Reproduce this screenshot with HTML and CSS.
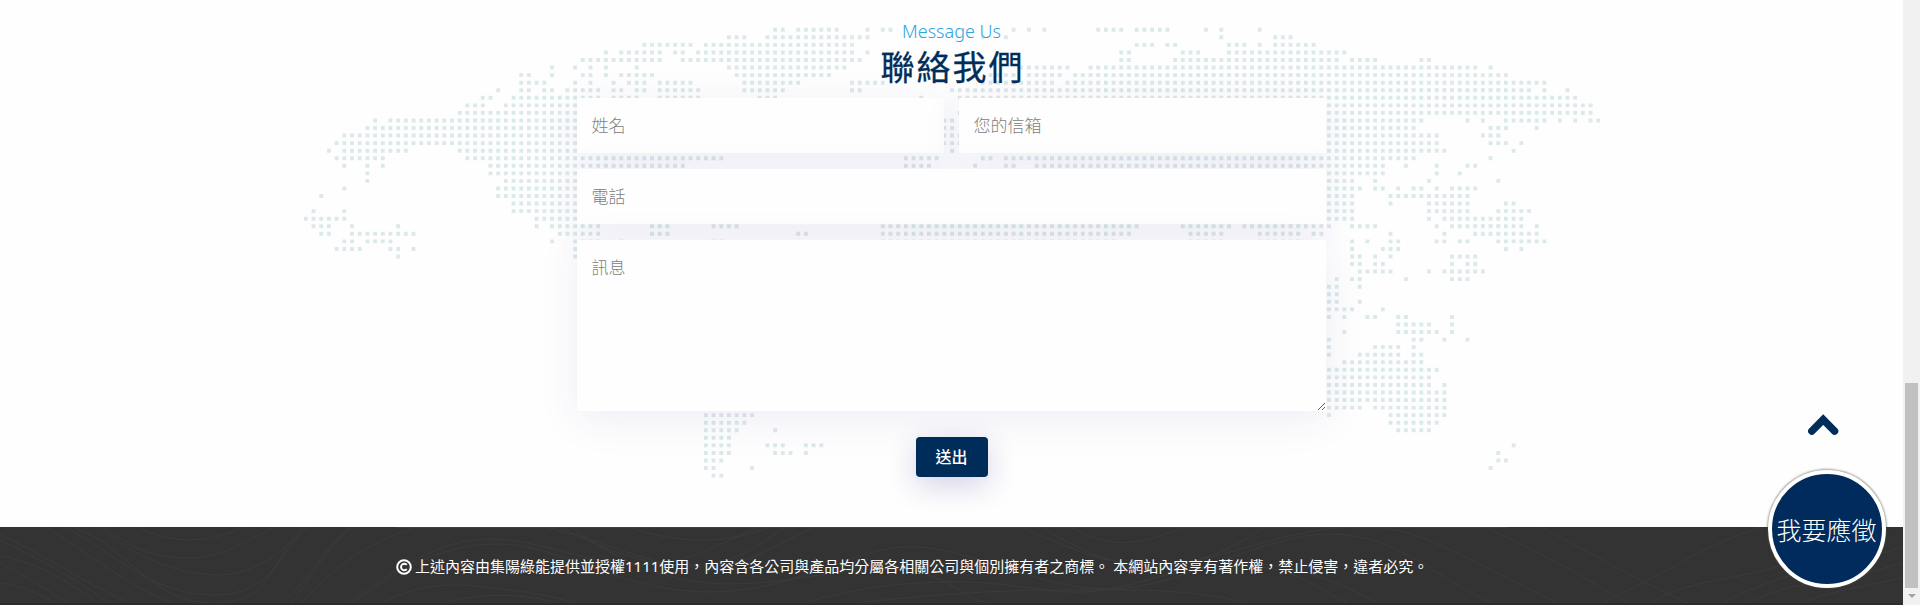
FILE: index.html
```
<!DOCTYPE html>
<html lang="zh-Hant">
<head>
<meta charset="utf-8">
<title>聯絡我們</title>
<link rel="stylesheet" href="styles.css">
</head>
<body>
<div class="page">
  <section class="contact">
    <svg class="map" viewBox="-0.5 -0.5 169 60" preserveAspectRatio="none" aria-hidden="true">
      <path d="M61 0h1.5M64 0h5.5M73 0h.5M75 0h1.5M92 0h.5M94 0h.5M96 0h.5M103 0h3.5M108 0h4.5M117 0h.5M119 0h.5M124 0h.5
      M55 1h2.5M60 1h13.5M88 1h.5M91 1h.5M119 1h.5M126 1h2.5
      M44 2h6.5M52 2h19.5M108 2h2.5M112 2h1.5M120 2h2.5M124 2h.5M126 2h5.5
      M39 3h.5M41 3h5.5M48 3h1.5M51 3h20.5M73 3h.5M106 3h1.5M114 3h2.5M120 3h15.5
      M36 4h10.5M49 4h23.5M106 4h1.5M113 4h21.5M136 4h3.5M145 4h1.5
      M32 5h.5M35 5h.5M37 5h.5M39 5h.5M43 5h.5M55 5h15.5M93 5h6.5M102 5h50.5M154 5h.5
      M28 6h1.5M32 6h.5M36 6h1.5M39 6h.5M41 6h4.5M56 6h12.5M89 6h3.5M94 6h4.5M100 6h56.5
      M28 7h3.5M35 7h.5M37 7h.5M40 7h.5M42 7h2.5M46 7h4.5M57 7h7.5M71 7h4.5M88 7h9.5M99 7h62.5
      M25 8h.5M28 8h1.5M31 8h1.5M34 8h4.5M40 8h1.5M43 8h1.5M46 8h5.5M57 8h5.5M71 8h1.5M84 8h75.5M161 8h.5M164 8h.5
      M23 9h1.5M27 9h11.5M40 9h3.5M46 9h5.5M59 9h2.5M80 9h.5M85 9h80.5
      M21 10h2.5M26 10h9.5M133 10h34.5 M20 11h15.5M85 11h.5M133 11h34.5
      M9 12h.5M11 12h24.5M83 12h1.5M133 12h12.5M151 12h.5M153 12h.5M156 12h5.5M163 12h.5M165 12h.5M167 12h1.5
      M8 13h27.5M83 13h1.5M133 13h11.5M154 13h2.5M160 13h.5
      M5 14h30.5M83 14h2.5M133 14h14.5M153 14h2.5
      M4 15h31.5M83 15h2.5M133 15h14.5M154 15h2.5M158 15h.5
      M3 16h.5M5 16h8.5M20 16h15.5M84 16h.5M133 16h15.5M157 16h.5
      M4 17h6.5M21 17h33.5M78 17h4.5M88 17h1.5M91 17h53.5M154 17h.5
      M5 18h.5M8 18h.5M10 18h.5M24 18h25.5M78 18h3.5M87 18h.5M91 18h1.5M95 18h45.5M143 18h.5M147 18h.5M151 18h1.5
      M8 19h.5M24 19h11.5M133 19h7.5M147 19h.5M150 19h.5
      M8 20h.5M26 20h9.5M133 20h3.5M139 20h.5M146 20h.5M155 20h.5
      M5 21h.5M25 21h10.5M133 21h4.5M139 21h1.5M142 21h.5M144 21h1.5M147 21h.5M149 21h3.5
      M2 22h.5M25 22h10.5M133 22h3.5M141 22h10.5
      M27 23h8.5M133 23h3.5M141 23h.5M146 23h5.5M156 23h1.5
      M1 24h.5M5 24h.5M27 24h8.5M133 24h3.5M146 24h5.5M155 24h4.5
      M0 25h5.5M30 25h5.5M133 25h3.5M146 25h.5M148 25h10.5
      M1 26h2.5M6 26h.5M12 26h.5M30 26h.5M32 26h6.5M45 26h2.5M53 26h3.5M75 26h33.5M114 26h6.5M122 26h11.5M136 26h3.5M147 26h.5M149 26h9.5M160 26h.5
      M2 27h1.5M6 27h8.5M33 27h5.5M45 27h2.5M64 27h1.5M75 27h32.5M115 27h4.5M124 27h5.5M131 27h1.5M141 27h.5M148 27h.5M152 27h8.5
      M5 28h1.5M8 28h3.5M32 28h.5M35 28h3.5M41 28h.5M53 28h1.5M75 28h30.5M115 28h4.5M124 28h5.5M136 28h.5M138 28h.5M141 28h1.5M147 28h1.5M150 28h1.5M155 28h6.5
      M4 29h3.5M11 29h1.5M14 29h.5M35 29h.5M136 29h.5M140 29h2.5M156 29h.5M158 29h.5
      M12 30h.5M35 30h.5M136 30h1.5M139 30h.5M141 30h.5M149 30h3.5
      M136 31h1.5M139 31h1.5M149 31h.5M151 31h1.5
      M137 32h4.5M146 32h.5M148 32h5.5 M134 33h.5M136 33h1.5M143 33h.5M149 33h2.5
      M133 34h1.5M137 34h.5 M133 35h1.5 M133 36h1.5M137 36h.5 M133 37h3.5M140 37h.5
      M133 38h.5M135 38h.5M138 38h1.5M142 38h1.5M149 38h.5 M142 39h4.5M149 39h.5
      M135 40h.5M142 40h5.5M149 40h.5 M133 41h.5M144 41h1.5M148 41h.5M151 41h.5
      M133 42h.5M139 42h3.5M144 42h.5 M133 43h.5M137 43h5.5M144 43h1.5
      M135 44h10.5 M133 45h14.5 M133 46h13.5 M133 47h13.5M148 47h.5 M133 48h15.5 M133 49h15.5
      M133 50h4.5M139 50h9.5 M52 51h6.5M133 51h.5M141 51h7.5 M52 52h5.5M141 52h6.5
      M52 53h4.5M61 53h.5M142 53h4.5 M52 54h3.5 M52 55h3.5M60 55h2.5M65 55h2.5M157 55h.5
      M52 56h3.5M61 56h2.5M65 56h.5M155 56h.5 M52 57h2.5M155 57h1.5 M52 58h1.5M58 58h.5M154 58h.5 M53 59h1.5"/>
    </svg>
    <p class="eyebrow">Message Us</p>
    <h2 class="title">聯絡我們</h2>
    <form class="form">
      <input class="field" type="text" placeholder="姓名">
      <input class="field" type="text" placeholder="您的信箱">
      <input class="field wide" type="text" placeholder="電話">
      <textarea class="field wide area" placeholder="訊息"></textarea>
    </form>
    <button class="send" type="button">送出</button>
  </section>

  <footer class="footer">
    <svg class="waves" viewBox="0 0 1903 76" aria-hidden="true">
      <path d="M0 7C70 42 100 65 133 77M0 13C60 42 90 62 110 77M0 29C40 35 75 60 100 77M0 36C25 48 50 65 70 77M0 56C25 59 40 68 58 77
      M45 0C80 20 120 55 175 77M64 0C110 22 150 68 213 68S280 22 308 0M73 0C130 20 150 76 213 76S270 30 303 0M100 0C140 35 185 48 220 48S290 20 305 0M104 0C130 20 150 30 185 31S245 15 275 0M140 0C165 17 210 17 243 0
      M280 77C315 50 320 20 353 0M290 77C315 45 325 25 350 0M300 77C350 25 375 15 415 0M345 77C400 40 440 12 490 12S590 38 640 38S720 15 760 0M350 77C405 40 440 17 500 17S620 65 710 65S860 15 920 20S1040 62 1110 62S1260 7 1330 7S1440 55 1495 77
      M380 77C430 50 470 58 510 63S550 70 580 77M440 77C480 64 530 67 560 77M545 0C610 15 650 40 700 40S770 20 815 0M560 0C620 30 650 38 690 38S745 28 785 0M570 0C620 35 670 57 730 57S830 42 890 42S960 77 1000 77M630 0C670 15 720 20 770 0
      M800 77C860 60 900 55 960 55S1060 72 1110 62S1180 39 1240 39S1310 60 1350 77M850 77C920 68 1000 63 1060 63S1190 60 1250 77M1020 0C1080 25 1110 40 1160 38S1235 18 1265 0M1042 0C1090 30 1120 38 1150 38M1070 0C1110 20 1130 22 1185 0
      M1190 35C1250 22 1300 0 1360 0S1440 20 1560 77M1190 35C1280 30 1330 50 1380 77M1485 0C1560 35 1600 60 1630 77M1540 0C1600 30 1630 50 1690 77M1600 77C1660 50 1700 20 1760 0M1650 77C1690 50 1740 55 1790 35M1720 77C1790 40 1840 40 1903 20M1745 77C1800 50 1850 55 1903 35M1800 77C1840 60 1870 60 1903 50"/>
    </svg>
    <div class="container">
      <svg class="copy" viewBox="0 0 16 16" role="img" aria-label="Copyright"><circle cx="8" cy="8" r="6.8"/><path d="M10.8 10.2a3.3 3.3 0 1 1 0-4.4"/></svg>
      <span>上述內容由集陽綠能提供並授權1111使用，內容含各公司與產品均分屬各相關公司與個別擁有者之商標。 本網站內容享有著作權，禁止侵害，違者必究。</span>
    </div>
  </footer>
</div>

<svg class="to-top" viewBox="0 0 32 22" role="img" aria-label="Top"><path d="M4.8 17.2 16.2 5.6 27.6 17.2"/></svg>
<div class="apply">我要應徵</div>
<div class="scrollbar"><div class="thumb"></div><div class="arrow"></div></div>
</body>
</html>
```
FILE: styles.css
```
* { box-sizing: border-box; }
body {
  margin: 0;
  height: 605px;
  overflow: hidden;
  background: #fefefe;
  font-family: "Open Sans", "Noto Sans CJK TC", sans-serif;
}
.page { width: 1903px; }
.contact {
  position: relative;
  height: 527px;
  padding-top: 18px;
  display: flex;
  flex-direction: column;
  align-items: center;
}
/* Dotted world map behind the form */
.map {
  position: absolute;
  left: 301.85px;
  top: 26.2px;
  width: 1300.1px;
  height: 453.4px;
  overflow: visible;
}
.map path {
  fill: none;
  stroke: #dce9ea;
  stroke-width: .52;
  stroke-dasharray: .5 .5;
  transform: translateX(-.25px);
}
.eyebrow, .title, .form, .send { position: relative; }
.eyebrow {
  margin: 0;
  font-family: "Noto Sans", sans-serif;
  font-size: 18px;
  line-height: 26px;
  font-weight: 300;
  color: #2ba5df;
}
.title {
  margin: 0;
  height: 54px;
  font: 400 34px/43px "Noto Sans CJK TC", sans-serif;
  letter-spacing: 2px;
  padding-left: 2px;
  color: #002e5b;
  -webkit-text-stroke: .3px #002e5b;
}
.form {
  width: 749px;
  display: grid;
  grid-template-columns: 1fr 1fr;
  gap: 16px 15px;
}
.field {
  width: 100%;
  height: 55px;
  margin: 0;
  border: 0;
  border-radius: 0;
  padding: 0 15px 2px 14.5px;
  background: #fefefe;
  box-shadow: 0 8px 40px rgba(45, 40, 150, .08);
  font: 300 17px/25px "Noto Sans CJK TC", sans-serif;
}
.field::placeholder { color: #808080; opacity: 1; }
.wide { grid-column: 1 / -1; }
.area { height: 171px; padding-top: 14px; resize: vertical; display: block; }
.send {
  margin-top: 26px;
  width: 72px;
  height: 40px;
  border: 0;
  border-radius: 4px;
  padding: 0 6px 2px;
  background: #002c5a;
  box-shadow: 0 8px 30px rgba(30, 25, 130, .2);
  color: #fff;
  font: 500 16px/24px "Noto Sans CJK TC", sans-serif;
}
.footer {
  position: relative;
  height: 78px;
  background: #333;
  border-bottom: 2px solid #302a30;
}
.waves { position: absolute; inset: 0; width: 1903px; height: 76px; }
.waves path { fill: none; stroke: #3b3b3b; stroke-width: 1; }
.container {
  position: relative;
  width: 1111px;
  height: 76px;
  margin: 0 auto;
  padding-top: 2px;
  border-top: 1px solid #084c86;
  display: flex;
  align-items: center;
  gap: 4px;
  color: #fff;
  font: 400 15px/24px "Noto Sans", "Noto Sans CJK TC", sans-serif;
  white-space: nowrap;
}
.container span { margin: -2px 0 0 -1px; }
.copy { width: 16px; height: 16px; }
.copy circle, .copy path { fill: none; stroke: #fff; stroke-width: 2; }
.to-top { position: absolute; left: 1807px; top: 414px; width: 32px; height: 22px; }
.to-top path { fill: none; stroke: #002e5b; stroke-width: 7.4; stroke-linecap: round; stroke-linejoin: miter; }
.apply {
  position: absolute;
  left: 1768px;
  top: 470px;
  width: 118px;
  height: 118px;
  border: 4px solid #fff;
  border-radius: 50%;
  background: #002b5c;
  box-shadow: 0 0 2px 1px rgba(70, 70, 60, .5);
  color: #fff;
  display: flex;
  justify-content: center;
  font: 300 25px/110px "Noto Sans CJK TC", sans-serif;
  white-space: nowrap;
  text-indent: -1px;
}
.scrollbar {
  position: absolute;
  right: 0;
  top: 0;
  width: 17px;
  height: 605px;
  background: #f1f1f1;
}
.thumb { width: 13px; height: 205px; margin: 383px 2px 0; background: #c1c1c1; }
.arrow {
  width: 0;
  margin: 6px auto 0;
  border: 4px solid transparent;
  border-top-color: #a3a3a3;
  border-bottom: 0;
}
```
